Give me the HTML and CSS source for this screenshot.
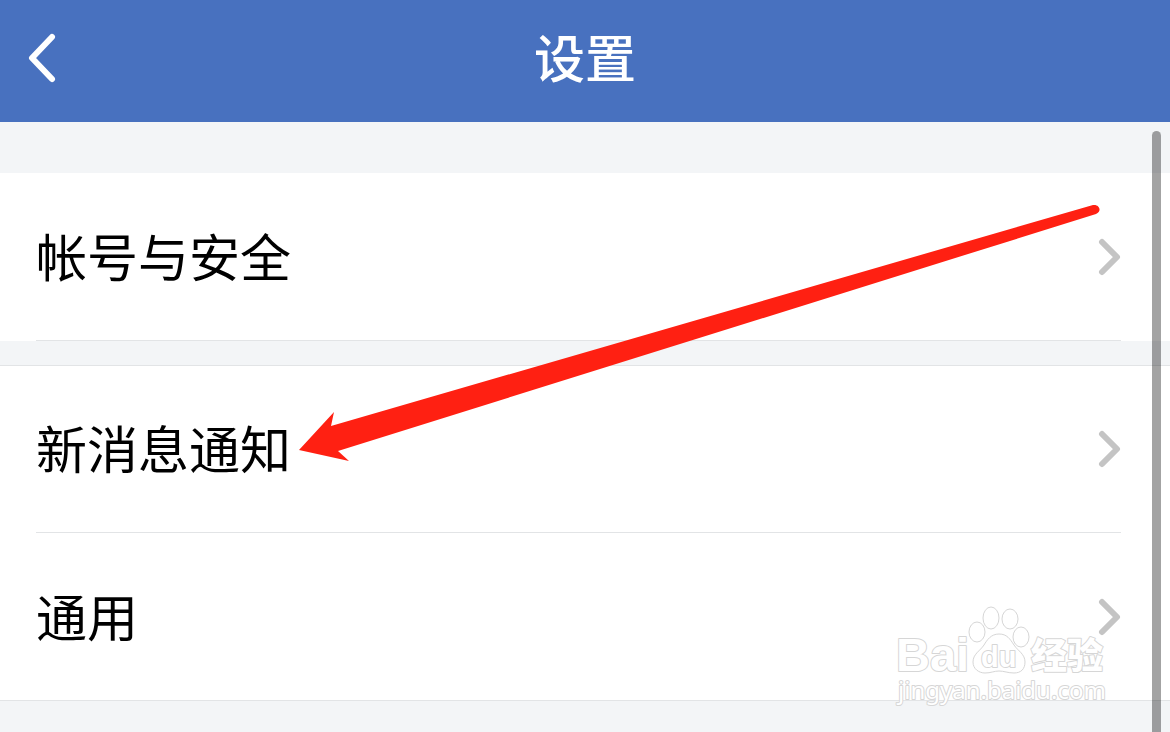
FILE: index.html
```
<!DOCTYPE html>
<html lang="zh-CN">
<head>
    <meta charset="UTF-8">
    <meta name="viewport" content="width=device-width, initial-scale=1.0">
    <title>设置</title>
    <link rel="stylesheet" href="styles.css">
</head>
<body>

    <header class="navbar">
        <button type="button" class="btn-back" aria-label="返回">
            <svg width="32" height="56" viewBox="0 0 32 56"><path d="M27 7 L7 28 L27 49"/></svg>
        </button>
        <h1 class="title">设置</h1>
    </header>

    <main class="settings">
        <nav class="group">
            <a href="#account" class="row">
                <span class="row-label">帐号与安全</span>
                <svg class="chevron" width="24" height="40" viewBox="0 0 24 40"><path d="M5 5 L20 20 L5 35"/></svg>
            </a>
        </nav>

        <nav class="group group-lined">
            <a href="#notify" class="row">
                <span class="row-label">新消息通知</span>
                <svg class="chevron" width="24" height="40" viewBox="0 0 24 40"><path d="M5 5 L20 20 L5 35"/></svg>
            </a>
            <a href="#general" class="row row-last">
                <span class="row-label">通用</span>
                <svg class="chevron" width="24" height="40" viewBox="0 0 24 40"><path d="M5 5 L20 20 L5 35"/></svg>
            </a>
        </nav>
    </main>

    <div class="scrollbar"></div>

    <!-- Pointer to the notification row -->
    <svg class="arrow" width="804" height="262" viewBox="298 202 804 262" aria-hidden="true">
        <path d="M299 450 L334 412 L331 426 L1093 205 C1100 204 1102 212 1096 214 L338 451 L349 461 Z"/>
    </svg>

    <!-- Watermark -->
    <svg class="watermark" width="220" height="112" viewBox="892 600 220 112">
        <text class="mark-name" x="896" y="671">Bai</text>
        <ellipse cx="977" cy="632" rx="8" ry="10"/>
        <ellipse cx="991" cy="618" rx="8" ry="11"/>
        <ellipse cx="1010" cy="619" rx="8" ry="10"/>
        <ellipse cx="1021" cy="637" rx="8" ry="10"/>
        <path d="M999 634 C991 634 987 640 984 645 C980 651 973 654 973 662 C973 669 979 673 985 673 C991 673 994 671 999 671 C1004 671 1008 673 1014 673 C1021 673 1025 669 1025 662 C1025 654 1018 651 1014 645 C1010 639 1007 634 999 634 Z"/>
        <text class="mark-du" x="981" y="667">du</text>
        <text class="mark-cn" x="1031" y="669">经验</text>
        <text class="mark-url" x="898" y="699">jingyan.baidu.com</text>
    </svg>

</body>
</html>
```
FILE: styles.css
```
:root {
    --bar: #4871bf;
    --bg: #f3f5f7;
    --line: #e2e4e6;
    --chevron: #c4c4c4;
    --arrow: #ff2012;
}

*, *::before, *::after {
    box-sizing: border-box;
    margin: 0;
    padding: 0;
}

body {
    position: relative;
    min-height: 100vh;
    overflow: hidden;
    font-family: "Noto Sans CJK SC", sans-serif;
    background: var(--bg);
    color: #000;
}

/* Top bar */
.navbar {
    display: grid;
    grid-template-columns: 1fr auto 1fr;
    align-items: center;
    height: 122px;
    padding: 0 25px 6px;
    background: var(--bar);
    color: #fff;
}

.btn-back {
    display: flex;
    justify-self: start;
    border: 0;
    background: none;
    cursor: pointer;
}

.btn-back path {
    fill: none;
    stroke: #fff;
    stroke-width: 6;
    stroke-linecap: round;
    stroke-linejoin: round;
}

.title {
    padding-bottom: 5px;
    font-size: 51px;
    font-weight: 500;
    line-height: 72px;
}

/* Rows */
.settings {
    display: flex;
    flex-direction: column;
    gap: 24px;
    padding-top: 51px;
}

.group {
    background: #fff;
}

.group-lined {
    border-top: 1px solid var(--line);
}

.row {
    display: flex;
    align-items: center;
    justify-content: space-between;
    height: 168px;
    margin: 0 49px 0 36px;
    border-bottom: 1px solid var(--line);
    font-size: 51px;
    line-height: 76px;
    color: inherit;
    text-decoration: none;
}

.group-lined .row {
    height: 167px;
}

.group-lined .row-last {
    height: 168px;
    margin: 0;
    padding: 0 49px 0 36px;
}

.row-label {
    padding-bottom: 4px;
}

.chevron path {
    fill: none;
    stroke: var(--chevron);
    stroke-width: 6;
    stroke-linecap: round;
    stroke-linejoin: round;
}

/* Overlays */
.scrollbar {
    position: absolute;
    top: 131px;
    right: 9px;
    bottom: 0;
    width: 9px;
    border-radius: 5px 5px 0 0;
    background: rgba(0, 0, 0, 0.36);
}

.arrow {
    position: absolute;
    top: 202px;
    left: 298px;
    fill: var(--arrow);
    pointer-events: none;
}

.watermark {
    position: absolute;
    right: 58px;
    bottom: 20px;
    fill: #fff;
    stroke: #d6d6d6;
    stroke-width: 1;
    pointer-events: none;
}

.watermark text {
    stroke-width: 2;
    stroke-linejoin: round;
    paint-order: stroke;
}

.mark-name {
    font: bold 47px "Liberation Sans", sans-serif;
}

.mark-du {
    font: bold 29px "Liberation Sans", sans-serif;
}

.mark-cn {
    font: 900 36px "Noto Sans CJK SC", sans-serif;
}

.mark-url {
    font: 24px "Noto Sans", sans-serif;
}
```
